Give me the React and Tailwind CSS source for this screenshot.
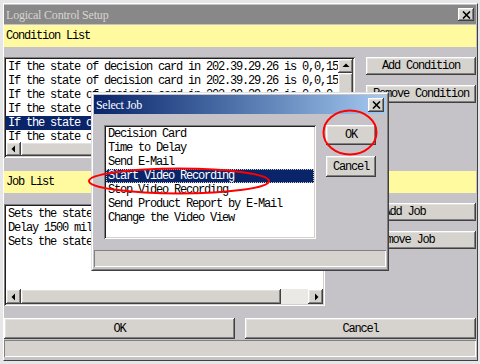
const raised =
  "bg-[#d6d3ce] shadow-[inset_-1px_-1px_#404040,inset_1px_1px_#ffffff,inset_-2px_-2px_#808080,inset_2px_2px_#e4e2de]";
const sunken =
  "bg-white shadow-[inset_1px_1px_#808080,inset_-1px_-1px_#ffffff,inset_2px_2px_#202020,inset_-2px_-2px_#d4d0c8]";
const mono = "font-['Liberation_Mono',monospace] text-[12px] tracking-[-1.2px] leading-[14px]";

const Arrow = ({ dir }) => {
  const pts = {
    up: "1.5,6 8.5,6 5,2.5",
    left: "6,1.5 6,8.5 2.5,5",
    right: "4,1.5 4,8.5 7.5,5",
  }[dir];
  return (
    <svg width="10" height="10" viewBox="0 0 10 10">
      <polygon points={pts} fill="#000" />
    </svg>
  );
};

const Button = ({ children, className = "" }) => (
  <div className={`${raised} ${mono} flex items-center justify-center text-black ${className}`}>
    {children}
  </div>
);

const CloseBox = ({ className = "" }) => (
  <div className={`${raised} flex items-center justify-center ${className}`}>
    <svg width="9" height="8" viewBox="0 0 9 8">
      <path d="M1 0.5 L8 7.5 M8 0.5 L1 7.5" stroke="#000" strokeWidth="1.6" />
    </svg>
  </div>
);

const Banner = ({ label }) => (
  <div className={`h-[22px] bg-[#fffaa0] pl-[2px] flex items-center ${mono} text-black`}>{label}</div>
);

const conditions = [
  "If the state of decision card in 202.39.29.26 is 0,0,15",
  "If the state of decision card in 202.39.29.26 is 0,0,15",
  "If the state of decision card in 202.39.29.26 is 0,0,0",
  "If the state of decision card in 202.39.29.26 is 0,0,0",
  "If the state of decision card in 202.39.29.26 is 0,0,15",
  "If the state of decision card in 202.39.29.26 is 0,0,0",
];

const jobs = [
  "Sets the state of decision card in 202.39.29.26 to 0,0,1",
  "Delay 1500 milliseconds",
  "Sets the state of decision card in 202.39.29.26 to 0,0,0",
];

const choices = [
  "Decision Card",
  "Time to Delay",
  "Send E-Mail",
  "Start Video Recording",
  "Stop Video Recording",
  "Send Product Report by E-Mail",
  "Change the Video View",
];

const SelectJob = () => (
  <div className="absolute left-[91px] top-[92px] w-[298px] h-[179px] border border-[#e0dfe3] border-r-[#404040] border-b-[#404040]">
    <div className="h-full border border-white border-r-[#808080] border-b-[#808080] bg-[#c5c3c8] p-[1px] flex flex-col">
      <div className="h-[19px] shrink-0 flex items-center justify-between pl-[2px] pr-[2px] bg-gradient-to-r from-[#0a246a] to-[#a6caf0]">
        <span className="font-['Liberation_Serif',serif] text-[12px] tracking-[-0.3px] text-white">Select Job</span>
        <CloseBox className="w-[16px] h-[14px]" />
      </div>
      <div className="flex gap-[10px] pl-[10px] mt-[11px]">
        <div className={`${sunken} w-[212px] h-[114px] pt-[2px] px-[2px] ${mono}`}>
          {choices.map((c, i) =>
            i === 3 ? (
              <div key={c} className="h-[14px] bg-[#0a246a] text-white pl-[2px] outline-1 outline-dotted outline-[#d4d0c8] -outline-offset-1">
                {c}
              </div>
            ) : (
              <div key={c} className="h-[14px] text-black pl-[2px]">
                {c}
              </div>
            )
          )}
        </div>
        <div className="flex flex-col gap-[11px]">
          <Button className="w-[50px] h-[20px]">OK</Button>
          <Button className="w-[50px] h-[21px]">Cancel</Button>
        </div>
      </div>
      <div className="mt-[11px] h-[17px] bg-[#d6d3ce] shadow-[inset_1px_1px_#808080,inset_-1px_-1px_#ffffff]" />
    </div>
  </div>
);

export default function App() {
  return (
    <div className="relative w-[480px] h-[364px] bg-[#e6e6e6] pt-[3px] overflow-hidden">
      <div className="ml-[3px] w-[475px] h-[358px] bg-[#c5c3c8] border-l border-t border-white border-r border-b border-r-[#404040] border-b-[#404040] pt-[1px] pr-[1px] flex flex-col">
        <div className="h-[19px] shrink-0 bg-[#888888] flex items-center justify-between pl-[2px] pr-[2px]">
          <span className="font-['Liberation_Serif',serif] text-[12px] tracking-[-0.2px] text-[#d8d5d0]">
            Logical Control Setup
          </span>
          <CloseBox className="w-[16px] h-[13px]" />
        </div>
        <div className="mt-[1px]">
          <Banner label="Condition List" />
        </div>

        <div className="mt-[10px] flex gap-[11px]">
          <div className={`${sunken} w-[351px] h-[101px] p-[2px] flex flex-col`}>
            <div className="flex flex-1 min-h-0">
              <div className={`flex-1 overflow-hidden pt-[1px] ${mono} whitespace-nowrap`}>
                {conditions.map((c, i) => (
                  <div
                    key={i}
                    className={`h-[14px] pl-[2px] ${i === 4 ? "bg-[#0a246a] text-white" : "text-black"}`}
                  >
                    {c}
                  </div>
                ))}
              </div>
              <div className="w-[15px] flex flex-col bg-[#ebe9e5]">
                <div className={`${raised} h-[14px] flex items-center justify-center`}>
                  <Arrow dir="up" />
                </div>
                <div className={`${raised} h-[36px]`} />
              </div>
            </div>
            <div className="h-[14px] flex bg-[#ebe9e5]">
              <div className={`${raised} w-[15px] flex items-center justify-center`}>
                <Arrow dir="left" />
              </div>
              <div className={`${raised} w-[240px]`} />
              <div className="flex-1" />
              <div className="w-[15px] bg-[#d6d3ce]" />
            </div>
          </div>
          <div className="flex flex-col gap-[10px]">
            <Button className="w-[110px] h-[18px]">Add Condition</Button>
            <Button className="w-[110px] h-[18px]">Remove Condition</Button>
          </div>
        </div>

        <div className="mt-[13px]">
          <Banner label="Job List" />
        </div>

        <div className="mt-[10px] flex gap-[8px]">
          <div className={`${sunken} mt-[1px] w-[321px] h-[102px] p-[2px] flex flex-col`}>
            <div className={`flex-1 overflow-hidden pt-[1px] ${mono} whitespace-nowrap`}>
              {jobs.map((j, i) => (
                <div key={i} className="h-[14px] pl-[2px] text-black">
                  {j}
                </div>
              ))}
            </div>
            <div className="h-[15px] flex bg-[#ebe9e5]">
              <div className={`${raised} w-[15px] flex items-center justify-center`}>
                <Arrow dir="left" />
              </div>
              <div className={`${raised} w-[260px]`} />
              <div className="flex-1" />
              <div className={`${raised} w-[15px] flex items-center justify-center`}>
                <Arrow dir="right" />
              </div>
            </div>
          </div>
          <div className="flex flex-col gap-[10px]">
            <Button className="w-[143px] h-[18px]">Add Job</Button>
            <Button className="w-[143px] h-[18px]">Remove Job</Button>
          </div>
        </div>

        <div className="mt-[12px] flex gap-[10px]">
          <Button className="w-[231px] h-[21px]">OK</Button>
          <Button className="flex-1 h-[21px]">Cancel</Button>
        </div>
        <div className="mt-[1px] h-[17px] bg-[#d6d3ce] shadow-[inset_1px_1px_#808080,inset_-1px_-1px_#ffffff]" />
      </div>

      <SelectJob />

      <svg className="absolute left-0 top-0 pointer-events-none" width="480" height="364">
        <ellipse cx="350" cy="132.5" rx="26.5" ry="22" fill="none" stroke="#ff0000" strokeWidth="2" />
        <ellipse cx="179" cy="181" rx="90" ry="12.5" fill="none" stroke="#ff0000" strokeWidth="2" />
      </svg>
    </div>
  );
}
